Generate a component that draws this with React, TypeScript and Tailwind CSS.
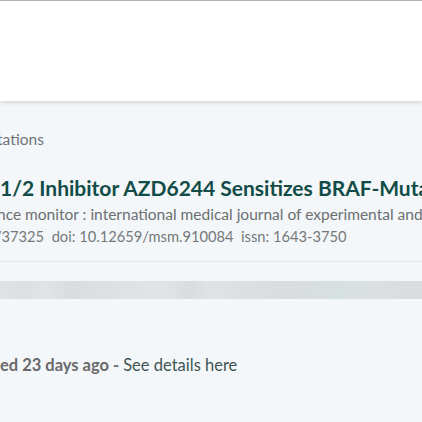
import React from 'react';

const App = () => {
  return (
    <div className="w-[422px] h-[422px] overflow-hidden bg-[#f4f7f9] font-['Lato','Noto_Sans',sans-serif]">
      {/* Header */}
      <div className="h-[101px] bg-white border-t border-[#b3b3b3] shadow-[0_2px_4px_rgba(0,0,0,0.12)] relative z-10"></div>

      {/* Publication card */}
      <div className="pt-[28px] border-b border-[#e3e8ec] pb-[14px]">
        <div className="-ml-[3px] whitespace-nowrap text-[15.5px] leading-[20px] text-[#6f7478]">
          tations
        </div>
        <h2 className="mt-[25px] whitespace-nowrap text-[21px] leading-[28px] font-bold text-[#124c48]">
          1/2 Inhibitor AZD6244 Sensitizes BRAF-Mutant Thyroid Cancer
        </h2>
        <p className="-ml-[3px] mt-[1px] whitespace-nowrap text-[15.5px] leading-[22px] text-[#6b6f72]">
          nce monitor : international medical journal of experimental and clinical research
        </p>
        <p className="-ml-[7px] whitespace-nowrap text-[14.7px] leading-[22px] text-[#75797c]">
          737325&nbsp; doi: 10.12659/msm.910084&nbsp; issn: 1643-3750
        </p>
      </div>

      {/* Blurred placeholder row */}
      <div className="mt-[19px] h-[18px] bg-[linear-gradient(90deg,#e0e3e6_0px,#dcdfe2_25px,#e1e4e7_45px,#dadde0_70px,#dcdfe2_90px,#e2e5e8_160px,#d8dce0_190px,#e0e3e6_210px,#dcdfe2_250px,#dadde0_290px,#d6e1df_340px,#dcdfe2_380px,#dadde0_410px)]"></div>

      {/* Status */}
      <div className="mt-[54px] whitespace-nowrap text-[16.5px] leading-[24px]">
        <span className="font-bold text-[#68696b]">ed 23 days ago - </span>
        <span className="text-[#3f5553]">See details here</span>
      </div>
    </div>
  );
};

export default App;
